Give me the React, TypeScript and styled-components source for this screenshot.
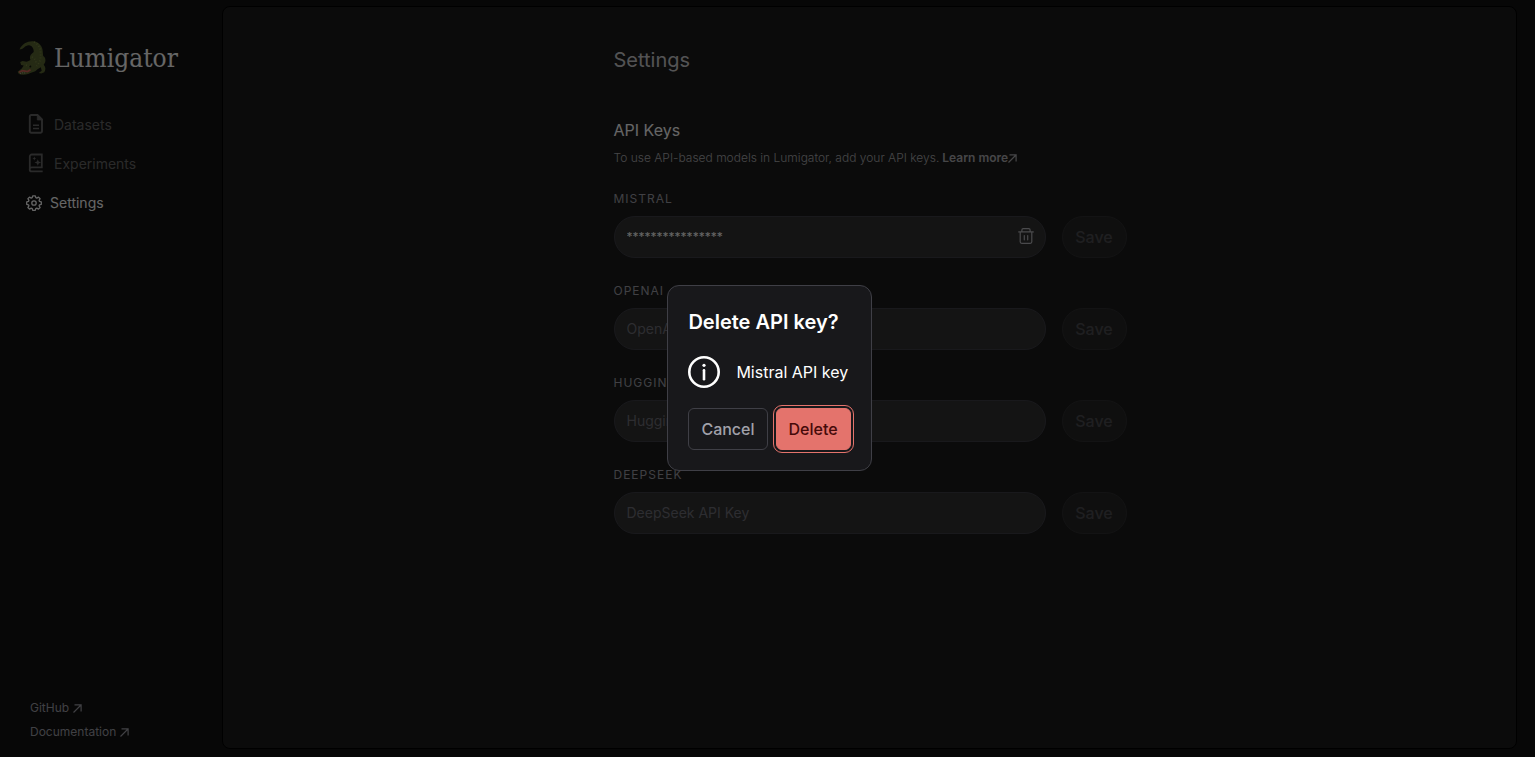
import React from "react";
import styled, { createGlobalStyle, css } from "styled-components";

const GlobalStyle = createGlobalStyle`
  *, *::before, *::after { box-sizing: border-box; }
  body {
    margin: 0;
    background: #121212;
    color: #fff;
    font-family: Inter, "Liberation Sans", sans-serif;
    font-size: 16px;
  }
  button, input { font-family: inherit; }
  h1, h2, p { margin: 0; }
`;

const Shell = styled.div`
  display: flex;
  min-height: 100vh;
`;

const Sidebar = styled.aside`
  display: flex;
  flex-direction: column;
  flex: 0 0 222px;
  padding: 38px 16px 13px;
`;

const Brand = styled.a`
  display: flex;
  align-items: center;
  gap: 6px;
  height: 40px;
  color: #fff;
  text-decoration: none;
`;

const Wordmark = styled.span`
  font-family: "DejaVu Serif Condensed", "DejaVu Serif", serif;
  font-stretch: condensed;
  font-size: 26px;
  line-height: 32px;
`;

const Nav = styled.nav`
  display: flex;
  flex-direction: column;
  gap: 15px;
  margin-top: 35px;
`;

const NavLink = styled.a<{ $active?: boolean }>`
  display: flex;
  align-items: center;
  gap: ${(p) => (p.$active ? 8 : 10)}px;
  height: 24px;
  padding-left: ${(p) => (p.$active ? 10 : 12)}px;
  color: ${(p) => (p.$active ? "#fff" : "#6a6a6a")};
  font-size: 14px;
  line-height: 24px;
  text-decoration: none;
`;

const FooterLinks = styled.div`
  display: flex;
  flex-direction: column;
  margin-top: auto;
  padding-left: 14px;
`;

const FooterLink = styled.a`
  display: flex;
  align-items: center;
  gap: 4px;
  color: #a1a1aa;
  font-size: 12px;
  line-height: 24px;
  text-decoration: none;
`;

const Panel = styled.main`
  display: flex;
  flex: 1;
  justify-content: center;
  margin: 6px 18px 8px 0;
  padding: 36px 23px 36px 24px;
  border: 1px solid #000;
  border-radius: 8px;
  background: #1d1d1d;
`;

const Content = styled.div`
  width: 100%;
  max-width: 513px;
`;

const PageTitle = styled.h1`
  color: #d0d0d3;
  font-size: 20px;
  font-weight: 400;
  line-height: 34px;
`;

const SectionTitle = styled.h2`
  margin-top: 41px;
  color: #fff;
  font-size: 16px;
  font-weight: 400;
  line-height: 24px;
`;

const Hint = styled.p`
  display: flex;
  align-items: center;
  margin-top: 7px;
  color: #b0b0b4;
  font-size: 12px;
  font-weight: 300;
  line-height: 18px;
`;

const HintLink = styled.a`
  display: inline-flex;
  align-items: center;
  margin-left: 3px;
  color: inherit;
  font-weight: 600;
  text-decoration: none;
`;

const Form = styled.form`
  display: flex;
  flex-direction: column;
  gap: 24px;
  margin-top: 23px;
`;

const Label = styled.label`
  display: block;
  margin-bottom: 8px;
  color: #a1a1aa;
  font-size: 12px;
  letter-spacing: 1px;
  line-height: 18px;
  text-transform: uppercase;
`;

const FieldRow = styled.div`
  display: flex;
  gap: 16px;
`;

const InputShell = styled.div`
  display: flex;
  flex: 1;
  align-items: center;
  height: 42px;
  padding: 0 11px 0 12px;
  border: 1px solid #3f3f46;
  border-radius: 21px;
  background: #333;
`;

const KeyInput = styled.input`
  flex: 1;
  min-width: 0;
  height: 20px;
  padding: 0;
  border: 0;
  outline: 0;
  background: none;
  color: #fff;
  font-size: 14px;
  line-height: 20px;
  &::placeholder { color: #71717a; opacity: 1; }
  &:not(:placeholder-shown) { font-size: 12px; }
`;

const IconButton = styled.button`
  display: flex;
  padding: 0 0 2px;
  border: 0;
  background: none;
  color: #b8b8bd;
`;

const buttonBase = css`
  height: 42px;
  padding: 0 12px;
  font-size: 16px;
  font-weight: 500;
  line-height: 24px;
`;

const SaveButton = styled.button`
  ${buttonBase}
  min-width: 65px;
  border: 1px solid #303032;
  border-radius: 21px;
  background: #272727;
  color: #4f4f53;
`;

const Mask = styled.div`
  position: fixed;
  inset: 0;
  display: flex;
  align-items: center;
  justify-content: center;
  padding: 0 0 2px 4px;
  background: rgba(0, 0, 0, 0.6);
`;

const Dialog = styled.section`
  padding: 20px;
  border: 1px solid #3f3f46;
  border-radius: 12px;
  background: #18181b;
`;

const DialogTitle = styled.h2`
  font-size: 20px;
  font-weight: 600;
  line-height: 32px;
`;

const Message = styled.div`
  display: flex;
  align-items: center;
  gap: 16px;
  margin-top: 18px;
  line-height: 32px;
`;

const Actions = styled.div`
  display: flex;
  gap: 8px;
  margin-top: 20px;
`;

const DialogButton = styled.button<{ $danger?: boolean }>`
  ${buttonBase}
  border: 1px solid ${(p) => (p.$danger ? "#e4736c" : "#3f3f46")};
  border-radius: 6px;
  background: ${(p) => (p.$danger ? "#e4736c" : "transparent")};
  color: ${(p) => (p.$danger ? "#450a0a" : "#a1a1aa")};
  outline: ${(p) => (p.$danger ? "1px solid #e4736c" : "none")};
  outline-offset: 2px;
`;

const Arrow = () => (
  <svg width="9" height="9" viewBox="0 0 9 9" fill="none" stroke="currentColor" strokeWidth="1.200" aria-hidden="true">
    <path d="M.5 8.500 8 1M1.500.9h6.600v6.600" />
  </svg>
);

const FileIcon = () => (
  <svg width="16" height="22" viewBox="0 0 16 22" fill="none" stroke="currentColor" strokeWidth="1.900" aria-hidden="true">
    <path d="M3.200 1h6.300L14 5.500v11.800c0 .8-.6 1.400-1.400 1.400H3.200c-.8 0-1.400-.6-1.400-1.400V2.400C1.800 1.600 2.400 1 3.200 1Z" />
    <path d="M9.300 1v5H14Z" fill="currentColor" strokeWidth=".8" />
    <path d="M5 11.300h6M5 14.500h6" strokeWidth="1.500" />
  </svg>
);

const ExperimentIcon = () => (
  <svg width="16" height="22" viewBox="0 0 16 22" fill="none" stroke="currentColor" strokeWidth="1.800" aria-hidden="true">
    <path d="M13.800 14.500V1.500H3.800c-1.100 0-2 .9-2 2V16M14.700 14.400H3.700a2 2 0 0 0 0 4h11" />
    <path d="m6.300 3.600.6 1.300 1.300.6-1.300.6-.6 1.300-.6-1.300-1.300-.6 1.300-.6ZM9.800 6.200l.9 2.400 2.400.9-2.400.9-.9 2.400-.9-2.400-2.400-.9 2.400-.9Z" fill="currentColor" stroke="none" />
  </svg>
);

const GearIcon = () => (
  <svg width="16" height="16" viewBox="0 0 16 16" fill="none" stroke="currentColor" strokeWidth="1.300" strokeLinejoin="round" aria-hidden="true">
    <path d="M6.700.8h2.600l.5 1.900 1 .4 1.700-1 1.600 1.600-1 1.700.4 1 1.800.5v2.400l-1.800.5-.4 1 1 1.700-1.600 1.600-1.700-1-1 .4-.5 1.800H6.700l-.5-1.800-1-.4-1.700 1-1.600-1.600 1-1.700-.4-1L.700 9.300V6.900l1.800-.5.4-1-1-1.700 1.600-1.600 1.700 1 1-.4Z" />
    <circle cx="8" cy="8" r="2.200" />
  </svg>
);

const TrashIcon = () => (
  <svg width="16" height="16" viewBox="0 0 16 16" fill="none" stroke="currentColor" strokeWidth="1.200" strokeLinecap="round" aria-hidden="true">
    <path d="M.7 3.900h14.600M3.900 3.700V2c0-.8.5-1.300 1.300-1.300h5.600c.8 0 1.300.5 1.300 1.300v1.700M2.200 4.100v9.700c0 1 .6 1.500 1.500 1.500h8.600c.9 0 1.500-.5 1.500-1.500V4.100M6.300 7.500v4.300M9.700 7.500v4.300" />
  </svg>
);

const InfoIcon = () => (
  <svg width="32" height="32" viewBox="0 0 32 32" fill="none" stroke="currentColor" aria-hidden="true">
    <circle cx="16" cy="16" r="14.700" strokeWidth="2.600" />
    <path d="M16 14.200v9" strokeWidth="2.600" strokeLinecap="round" />
    <circle cx="16" cy="9.300" r="1.600" fill="currentColor" stroke="none" />
  </svg>
);

const Gator = () => (
  <svg width="32" height="36" viewBox="0 0 32 36" aria-hidden="true">
    <path d="M3.500 9.500C6 3.500 12 .8 17 1.200c5 .4 8.500 3.500 9.500 8.300l.7 6.500c2 1 2.700 3.500 2 6.300l-1.500 2.500c2 2 2.300 5 .6 7.500l-3 1.300-2.600-.6 3-2.200-.9-3.500-3.300 2c-1.400 1.600-3 2.600-5 3-3 1.200-6 2.700-10 2.500-3 0-4.500-1-4.800-3l4-3.300 2-3-2.600-.5-.9-3 2.500-1 3.800.8c2-1 3.500-1.300 4-1.800-1-2-.9-4.500 1.500-6.500l1.700-1.500C18 8.700 16 5.300 13 5.200 9 5 7.500 9.500 3.500 9.500Z" fill="#5c6a32" />
    <path d="M18 2c4 2 6.500 5.500 6.500 10s1 9-4 14M16 17c2 1 4 3 4 6M10 25l5 2" fill="none" stroke="#7b8844" strokeWidth="1.800" strokeDasharray="1 2" />
    <path d="m3 32.200 3.500-1.500 5 .8 3-1.800" fill="none" stroke="#d8635b" strokeWidth="1.700" />
    <path d="m4 33.500 3-.8 3 .5" fill="none" stroke="#ddd" strokeWidth=".6" strokeDasharray="1 1" />
    <circle cx="14.300" cy="26.500" r="1" fill="#15180c" />
  </svg>
);

const providers = [
  { id: "mistral", name: "Mistral", placeholder: "Mistral API Key", value: "****************" },
  { id: "openai", name: "OpenAI", placeholder: "OpenAI API Key" },
  { id: "huggingface", name: "Hugging Face", placeholder: "Hugging Face API Key" },
  { id: "deepseek", name: "DeepSeek", placeholder: "DeepSeek API Key" },
];

export default function App() {
  return (
    <>
      <GlobalStyle />
      <Shell>
        <Sidebar>
          <Brand href="#home">
            <Gator />
            <Wordmark>Lumigator</Wordmark>
          </Brand>
          <Nav aria-label="Main">
            <NavLink href="#datasets"><FileIcon />Datasets</NavLink>
            <NavLink href="#experiments"><ExperimentIcon />Experiments</NavLink>
            <NavLink href="#settings" $active aria-current="page"><GearIcon />Settings</NavLink>
          </Nav>
          <FooterLinks>
            <FooterLink href="#github">GitHub <Arrow /></FooterLink>
            <FooterLink href="#documentation">Documentation <Arrow /></FooterLink>
          </FooterLinks>
        </Sidebar>
        <Panel>
          <Content>
            <PageTitle>Settings</PageTitle>
            <SectionTitle>API Keys</SectionTitle>
            <Hint>
              To use API-based models in Lumigator, add your API keys.
              <HintLink href="#learn-more">Learn more<Arrow /></HintLink>
            </Hint>
            <Form onSubmit={(e) => e.preventDefault()}>
              {providers.map((p) => (
                <div key={p.id}>
                  <Label htmlFor={p.id}>{p.name}</Label>
                  <FieldRow>
                    <InputShell>
                      <KeyInput id={p.id} type="text" placeholder={p.placeholder} defaultValue={p.value} />
                      {p.value && <IconButton type="button" aria-label={`Delete ${p.name} key`}><TrashIcon /></IconButton>}
                    </InputShell>
                    <SaveButton type="submit" disabled>Save</SaveButton>
                  </FieldRow>
                </div>
              ))}
            </Form>
          </Content>
        </Panel>
      </Shell>
      <Mask>
        <Dialog role="alertdialog" aria-modal="true" aria-labelledby="dialog-title">
          <DialogTitle id="dialog-title">Delete API key?</DialogTitle>
          <Message><InfoIcon />Mistral API key</Message>
          <Actions>
            <DialogButton type="button">Cancel</DialogButton>
            <DialogButton type="button" $danger>Delete</DialogButton>
          </Actions>
        </Dialog>
      </Mask>
    </>
  );
}
